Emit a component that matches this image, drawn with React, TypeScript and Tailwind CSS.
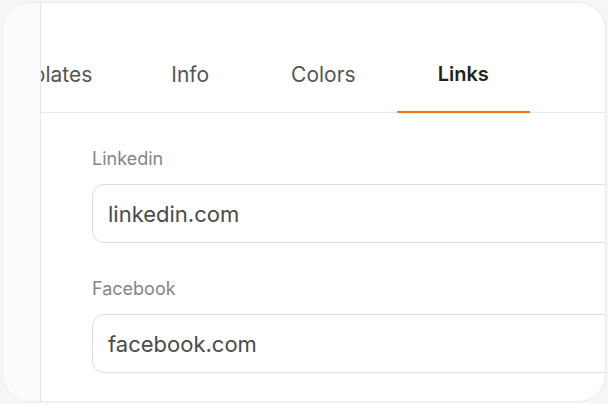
import React, { useState } from 'react';

const tabs = ['Templates', 'Info', 'Colors', 'Links'];

const Field: React.FC<{ label: string; value: string }> = ({ label, value }) => (
  <div className="flex flex-col">
    <label className="text-[18px] leading-[26px] text-[#858585]">{label}</label>
    <input
      type="text"
      defaultValue={value}
      className="mt-[12px] h-[59px] w-[560px] rounded-[12px] border border-[#dedede] bg-white px-[15px] text-[22px] text-[#4a4a4a] outline-none"
    />
  </div>
);

const App: React.FC = () => {
  const [active, setActive] = useState('Links');

  return (
    <div className="h-[404px] w-[608px] bg-[#f6f6f6] p-[2px]" style={{ fontFamily: 'Inter, "Noto Sans", sans-serif' }}>
      <div className="flex h-full overflow-hidden rounded-[28px] border border-[#ececec] bg-white">
        <div className="w-[38px] shrink-0 border-r border-[#e6e6e6] bg-[#fbfbfb]" />
        <div className="flex-1 overflow-hidden">
          <div className="flex border-b border-[#e8e8e8]">
            <div className="-ml-[92px] flex">
              {tabs.map((t, i) => (
                <button
                  key={t}
                  onClick={() => setActive(t)}
                  className={
                    (i === 0 ? 'pl-[41px] pr-[38px] ' : 'px-[41px] ') +
                    (t === active
                      ? '-mb-px shrink-0 whitespace-nowrap border-b-2 border-[#f97316] pt-[58px] pb-[23px] text-[20px] leading-[27px] font-semibold text-[#222]'
                      : '-mb-px shrink-0 whitespace-nowrap border-b-2 border-transparent pt-[58px] pb-[23px] text-[21px] leading-[27px] text-[#555]')
                  }
                >
                  {t}
                </button>
              ))}
            </div>
          </div>
          <div className="flex flex-col gap-[33px] pl-[51px] pt-[33px]">
            <Field label="Linkedin" value="linkedin.com" />
            <Field label="Facebook" value="facebook.com" />
          </div>
        </div>
      </div>
    </div>
  );
};

export default App;
